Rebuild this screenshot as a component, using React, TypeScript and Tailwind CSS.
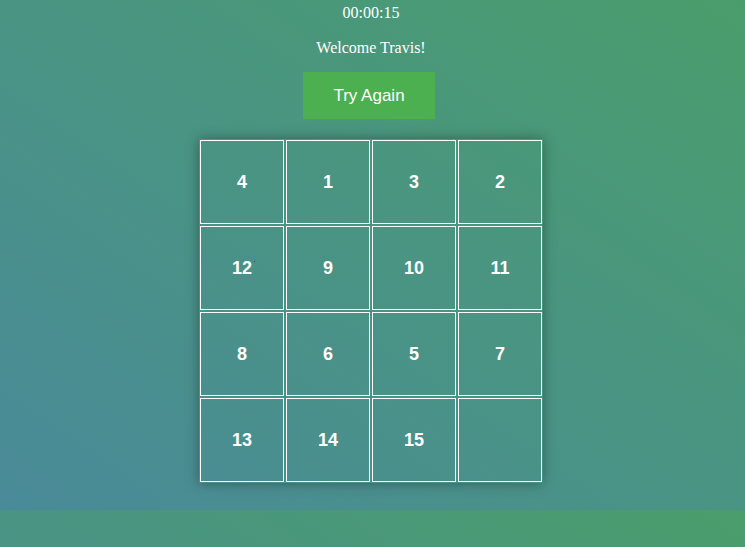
import { useState } from 'react';

const START = [4, 1, 3, 2, 12, 9, 10, 11, 8, 6, 5, 7, 13, 14, 15, 0];

export default function App() {
  const [tiles] = useState(START);

  return (
    <div className="min-h-[547px] w-full bg-linear-to-tr from-[#4a8a99] to-[#4a9d6b] bg-[length:100%_510px] bg-repeat-y">
      <div className="flex flex-col items-center h-[510px] pr-[3px] text-white">
        <div className="mt-[4px] text-base leading-[18px] font-['Liberation_Serif',serif]">00:00:15</div>
        <div className="mt-[17px] text-base leading-[18px] font-['Liberation_Serif',serif]">Welcome Travis!</div>
        <button className="mt-[15px] mr-[4px] w-[132px] h-[47px] pt-px bg-[#4caf50] text-white text-[17px] font-['Liberation_Sans',sans-serif]">
          Try Again
        </button>
        <div className="mt-[20px] grid grid-cols-4 w-[344px] shadow-[0_0_12px_rgba(0,0,0,0.35)]">
          {tiles.map((n, i) => (
            <div
              key={i}
              className="relative m-px w-[84px] h-[84px] border border-white flex items-center justify-center text-[18px] font-bold font-['Liberation_Sans',sans-serif]"
            >
              {n !== 0 ? n : ''}
              {n === 12 && <span className="absolute left-[53px] top-[34px] w-px h-px bg-blue-700" />}
            </div>
          ))}
        </div>
      </div>
    </div>
  );
}
